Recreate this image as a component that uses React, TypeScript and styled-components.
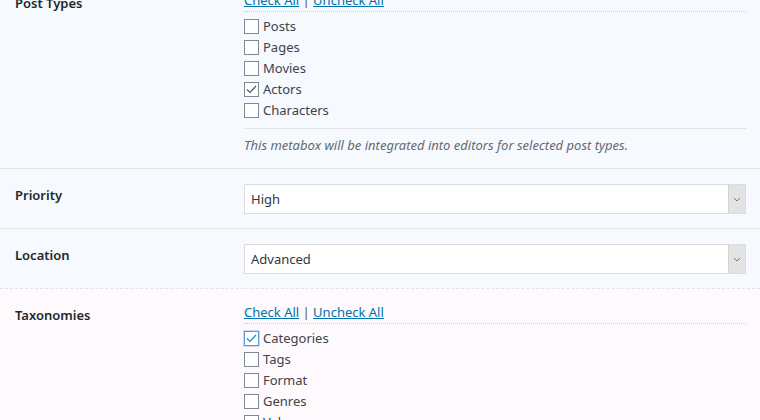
import React from "react";
import styled, { createGlobalStyle } from "styled-components";

const GlobalStyle = createGlobalStyle`
  html, body {
    margin: 0;
    padding: 0;
    background: #f6f9fe;
  }
  body {
    font-family: "Noto Sans", "Open Sans", sans-serif;
    font-size: 13px;
    color: #32373c;
    overflow: hidden;
  }
`;

// the screenshot is scrolled a little into the box
const Page = styled.div`
  margin-top: -23px;
`;

const Section = styled.div<{ $tint?: boolean; $dashed?: boolean; $first?: boolean }>`
  display: grid;
  grid-template-columns: 229px 1fr;
  padding: 15px 14px 14px 15px;
  background: ${(p) => (p.$tint ? "#fdf9fd" : "#f6f9fe")};
  border-top: ${(p) =>
    p.$first ? "none" : `1px ${p.$dashed ? "dashed" : "solid"} #e1e3e6`};
`;

const Label = styled.div`
  font-weight: 600;
  line-height: 18px;
  padding-top: 2px;
  color: #23282d;
`;

const Control = styled.div`
  display: flex;
  flex-direction: column;
`;

const LinkBar = styled.div`
  line-height: 16px;
  padding-bottom: 3px;
  border-bottom: 1px dotted #c9ccd1;
  color: #555;
`;

const TextLink = styled.a`
  color: #0073aa;
  text-decoration: underline;
  cursor: pointer;
`;

const CheckList = styled.div`
  display: flex;
  flex-direction: column;
  padding-top: 4px;
`;

const CheckRow = styled.label`
  display: flex;
  align-items: center;
  gap: 4px;
  height: 21px;
  line-height: 21px;
  color: #3c434a;
`;

const Box = styled.span<{ $focus?: boolean }>`
  box-sizing: border-box;
  width: 15px;
  height: 15px;
  border: 1px solid ${(p) => (p.$focus ? "#5b9dd9" : "#7e8993")};
  background: #fff;
  display: flex;
  align-items: center;
  justify-content: center;
  box-shadow: ${(p) => (p.$focus ? "0 0 0 1px rgba(91,157,217,0.35)" : "none")};
`;

const Rule = styled.div`
  margin-top: 7px;
  border-top: 1px solid #e1e3e6;
`;

const Description = styled.p`
  margin: 7px 0 0;
  line-height: 18px;
  font-style: italic;
  color: #646970;
`;

const SelectBox = styled.div`
  box-sizing: border-box;
  height: 30px;
  display: flex;
  align-items: stretch;
  background: #fff;
  border: 1px solid #dcdcde;
`;

const SelectValue = styled.div`
  flex: 1;
  padding-left: 6px;
  line-height: 28px;
  color: #32373c;
`;

const Arrow = styled.div`
  width: 16px;
  background: #e3e3e3;
  border-left: 1px solid #d2d2d2;
  display: flex;
  align-items: center;
  justify-content: center;
`;

const Check = ({ color }: { color: string }) => (
  <svg width="13" height="13" viewBox="0 0 13 13">
    <path d="M2 6.5 L5 9.5 L11 3" fill="none" stroke={color} strokeWidth="1.2" />
  </svg>
);

interface Item {
  name: string;
  checked?: boolean;
  focus?: boolean;
}

const CheckItems: React.FC<{ items: Item[] }> = ({ items }) => (
  <CheckList>
    {items.map((it) => (
      <CheckRow key={it.name}>
        <Box $focus={it.focus}>
          {it.checked && <Check color={it.focus ? "#1e8cbe" : "#50575e"} />}
        </Box>
        {it.name}
      </CheckRow>
    ))}
  </CheckList>
);

const Links = () => (
  <LinkBar>
    <TextLink>Check All</TextLink> | <TextLink>Uncheck All</TextLink>
  </LinkBar>
);

const Select: React.FC<{ value: string }> = ({ value }) => (
  <SelectBox>
    <SelectValue>{value}</SelectValue>
    <Arrow>
      <svg width="8" height="5" viewBox="0 0 8 5">
        <path d="M1 1 L4 4 L7 1" fill="none" stroke="#7a7a7a" strokeWidth="1" />
      </svg>
    </Arrow>
  </SelectBox>
);

const postTypes: Item[] = [
  { name: "Posts" },
  { name: "Pages" },
  { name: "Movies" },
  { name: "Actors", checked: true },
  { name: "Characters" },
];

const taxonomies: Item[] = [
  { name: "Categories", checked: true, focus: true },
  { name: "Tags" },
  { name: "Format" },
  { name: "Genres" },
  { name: "Value" },
];

export default function App() {
  return (
    <Page>
      <GlobalStyle />
      <Section $first>
        <Label>Post Types</Label>
        <Control>
          <Links />
          <CheckItems items={postTypes} />
          <Rule />
          <Description>
            This metabox will be integrated into editors for selected post types.
          </Description>
        </Control>
      </Section>
      <Section>
        <Label>Priority</Label>
        <Control>
          <Select value="High" />
        </Control>
      </Section>
      <Section>
        <Label>Location</Label>
        <Control>
          <Select value="Advanced" />
        </Control>
      </Section>
      <Section $tint $dashed>
        <Label>Taxonomies</Label>
        <Control>
          <Links />
          <CheckItems items={taxonomies} />
        </Control>
      </Section>
    </Page>
  );
}
